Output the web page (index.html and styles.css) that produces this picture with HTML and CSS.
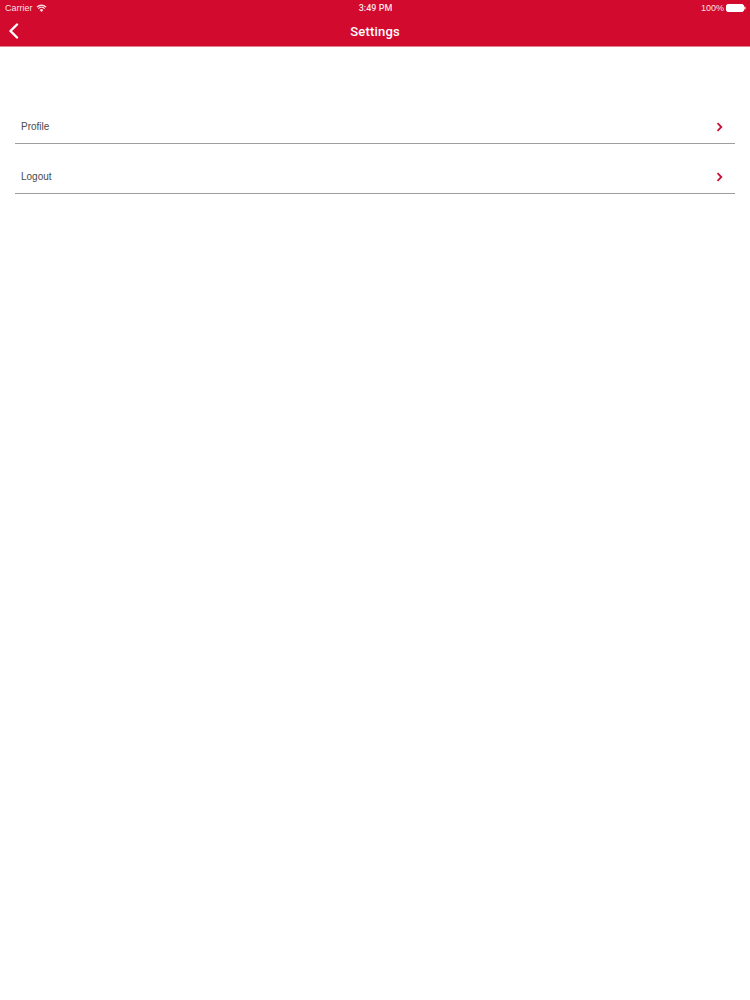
FILE: index.html
```html
<!DOCTYPE html>
<html>
<head>
<meta charset="utf-8">
<link rel="stylesheet" href="styles.css">
</head>
<body>
<div class="top">
  <div class="status">
    <div class="st-left">Carrier
      <svg class="wifi" width="11" height="8" viewBox="0 0 11 8"><path d="M5.5 8 L3.6 5.9 A2.7 2.7 0 0 1 7.4 5.9 Z" fill="#fff" opacity="0.85"/><path d="M2.3 4.6 A4.6 4.6 0 0 1 8.7 4.6" stroke="#fff" stroke-width="1.3" fill="none" opacity="0.85"/><path d="M0.9 3.1 A6.6 6.6 0 0 1 10.1 3.1" stroke="#fff" stroke-width="1.3" fill="none" opacity="0.85"/></svg>
    </div>
    <div class="st-center">3:49 PM</div>
    <div class="st-right">100%
      <svg class="battery" width="20" height="8" viewBox="0 0 20 8"><rect x="0.5" y="0.5" width="17" height="7" rx="1.5" fill="#fff" stroke="#fff"/><rect x="18.2" y="2.5" width="1.3" height="3" rx="0.5" fill="#fff"/></svg>
    </div>
  </div>
  <div class="nav">
    <svg class="back" width="12" height="16" viewBox="0 0 12 16"><path d="M9 1.5 L2.5 8 L9 14.5" stroke="#fff" stroke-width="2.4" fill="none" stroke-linecap="round" stroke-linejoin="round"/></svg>
    <div class="title">Settings</div>
  </div>
</div>
<div class="list">
  <div class="row"><span class="label">Profile</span>
    <svg class="chev" width="7" height="10" viewBox="0 0 7 10"><path d="M1.5 1.2 L5.3 5 L1.5 8.8" stroke="#c8103a" stroke-width="1.8" fill="none"/></svg>
  </div>
  <div class="row"><span class="label">Logout</span>
    <svg class="chev" width="7" height="10" viewBox="0 0 7 10"><path d="M1.5 1.2 L5.3 5 L1.5 8.8" stroke="#c8103a" stroke-width="1.8" fill="none"/></svg>
  </div>
</div>
</body>
</html>
```
FILE: styles.css
```css
html, body {
  margin: 0;
  padding: 0;
  background: #fff;
  font-family: "Liberation Sans", Arial, sans-serif;
}
.top {
  background: #d20a2e;
  border-bottom: 1px solid #e4808f;
  height: 46px;
  color: #fff;
}
.status {
  height: 16px;
  display: grid;
  grid-template-columns: 1fr auto 1fr;
  align-items: center;
  font-size: 9px;
  padding: 0 4px 0 5px;
  color: rgba(255,255,255,0.9);
}
.st-left {
  display: flex;
  align-items: center;
  gap: 3px;
}
.st-center {
  font-family: Roboto, "Liberation Sans", sans-serif;
  font-weight: 500;
  text-align: center;
}
.st-right {
  display: flex;
  align-items: center;
  justify-content: flex-end;
  gap: 2px;
}
.nav {
  position: relative;
  height: 30px;
  display: flex;
  align-items: center;
  justify-content: center;
}
.back {
  position: absolute;
  left: 8px;
  top: 7px;
}
.title {
  font-family: Roboto, "Liberation Sans", sans-serif;
  font-size: 13px;
  font-weight: 500;
  letter-spacing: 0.2px;
}
.list {
  padding: 47px 15px 0 15px;
}
.row {
  height: 49px;
  border-bottom: 1px solid #9e9e9e;
  display: flex;
  align-items: flex-end;
  justify-content: space-between;
  padding: 0 12px 0 6px;
  box-sizing: content-box;
}
.label {
  font-size: 10px;
  line-height: 12px;
  color: #4a4a4a;
  padding-bottom: 10px;
}
.chev {
  margin-bottom: 11px;
}
```
